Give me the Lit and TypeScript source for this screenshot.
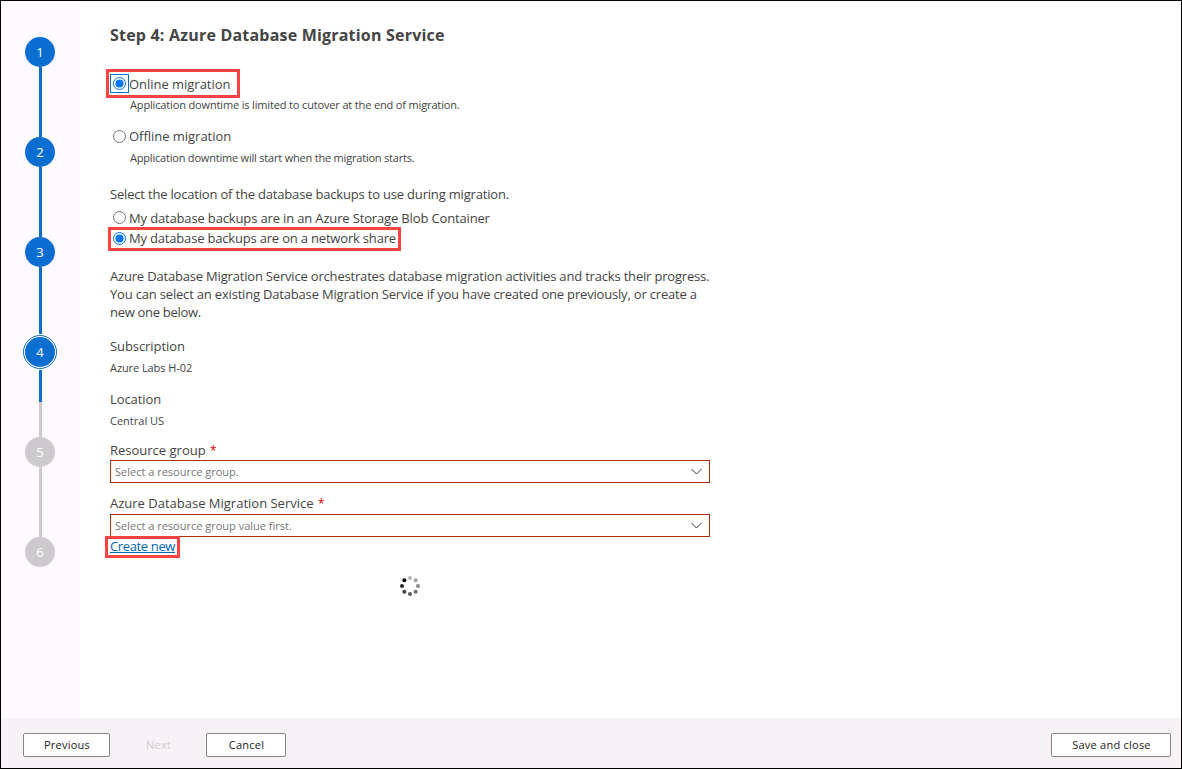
import { LitElement, html, css, svg } from "lit";
import { customElement, property } from "lit/decorators.js";
import { classMap } from "lit/directives/class-map.js";

@customElement("radio-dot")
class RadioDot extends LitElement {
  @property({ type: Boolean }) checked = false;
  static styles = css`
    :host { display: block; width: 13px; height: 13px; }
    svg { display: block; }
  `;
  render() {
    return html`<svg width="13" height="13" viewBox="0 0 13 13">
      <circle cx="6.5" cy="6.5" r="6" fill="#fff" stroke=${this.checked ? "#0075ff" : "#767676"}></circle>
      ${this.checked ? svg`<circle cx="6.5" cy="6.5" r="4" fill="#0075ff"></circle>` : ""}
    </svg>`;
  }
}

@customElement("wizard-steps")
class WizardSteps extends LitElement {
  @property({ type: Number }) current = 4;
  static styles = css`
    :host { display: flex; flex-direction: column; align-items: center; width: 78px; padding-top: 36px; box-sizing: border-box;
      font: 13px/30px "Open Sans", "Noto Sans", sans-serif; color: #fff; }
    .num { width: 30px; height: 30px; border-radius: 50%; background: #0a6ed1; text-align: center; flex: none; }
    .num.todo { background: #cccacd; }
    .num.current { outline: 1px solid #0a6ed1; outline-offset: 1px; }
    .line { width: 3px; height: 70px; margin-left: 1px; background: #0a6ed1; flex: none; }
    .line.before { height: 67px; margin-bottom: 3px; }
    .line.half { height: 67px; margin-top: 3px; background: linear-gradient(#0a6ed1 32px, #cccacd 32px); }
    .line.todo { background: #cccacd; }
  `;
  render() {
    return [1, 2, 3, 4, 5, 6].map(n => html`
      <div class=${classMap({ num: true, current: n === this.current, todo: n > this.current })}>${n}</div>
      ${n < 6 ? html`<div class=${classMap({ line: true, before: n === this.current - 1, half: n === this.current, todo: n > this.current })}></div>` : ""}`);
  }
}

@customElement("drop-down")
class DropDown extends LitElement {
  static styles = css`
    :host { display: flex; align-items: center; justify-content: space-between; box-sizing: border-box; width: 600px; height: 23px;
      border: 1px solid #b22d06; padding: 0 7px 0 4px; background: #fff; color: #767676; font: 11px/16px "Open Sans", "Noto Sans", sans-serif; }
    svg { display: block; }
  `;
  render() {
    return html`<span><slot></slot></span>
      <svg width="11" height="7" viewBox="0 0 11 7"><path d="M.5 1 5.5 6 10.5 1" fill="none" stroke="#333"></path></svg>`;
  }
}

@customElement("app-root")
class AppRoot extends LitElement {
  static styles = css`
    :host { display: block; }
    * { box-sizing: border-box; }
    .frame { width: 1182px; height: 769px; border: 1px solid #000; background: #fff; display: flex; flex-direction: column;
      font: 13px/18px "Open Sans", "Noto Sans", sans-serif; color: #444; overflow: hidden; white-space: nowrap; }
    .main { flex: 1; display: flex; min-height: 0; }
    .rail { width: 79px; background: #fefaff; }
    .content { display: flex; flex-direction: column; align-items: flex-start; padding: 22px 0 0 30px; }
    .title { font-size: 16px; line-height: 24px; font-weight: 700; letter-spacing: 0.2px; }
    .small { font-size: 11px; line-height: 16px; }
    .s1 { letter-spacing: -0.03px; } .s2 { letter-spacing: -0.08px; } .s3 { letter-spacing: -0.15px; }
    .s4 { letter-spacing: -0.185px; } .s5 { letter-spacing: -0.2px; } .s6 { letter-spacing: -0.29px; } .s7 { letter-spacing: -0.36px; }
    .opt { display: flex; align-items: center; height: 18px; padding-left: 3px; gap: 3px; }
    .mark { border: 3px solid #fa4343; }
    .mark.online { height: 29px; width: 134px; margin: 22px 0 0 -4px; padding: 0 0 0 1px; display: flex; align-items: center; }
    .online .focus { border: 1px solid #0078d4; padding: 2px; }
    .mark.share { height: 24px; width: 293px; margin-left: -2px; padding: 0 0 1px 2px; gap: 3px; display: flex; align-items: center; }
    .mark.create { height: 22px; width: 75px; margin: -1px 0 0 -5px; padding-left: 2px; line-height: 14px; position: relative; }
    .link { color: #0065b3; text-decoration: underline; }
    .low { padding-top: 2px; } .high { padding-bottom: 2px; }
    .indent { padding-left: 20px; }
    .req { color: #e00000; margin-left: 1px; font-size: 12px; line-height: 1; }
    .m1 { margin-top: -1px; } .m14 { margin-top: 14px; } .m5 { margin-top: 5px; } .m19 { margin-top: 19px; } .m6 { margin-top: 5px; margin-bottom: 1px; }
    .m16 { margin-top: 16px; } .m11 { margin-top: 11px; } .m12 { margin-top: 12px; } .g1 { margin-top: 1px; } .g2 { margin-top: 2px; }
    .spinner { width: 600px; display: flex; justify-content: center; margin-top: 17px; }
    .footer { height: 50px; background: #f7f2f6; display: flex; align-items: center; padding: 4px 10px 0 22px; font-size: 11px; color: #222; letter-spacing: 0.24px; }
    .btn { height: 24px; line-height: 22px; border: 1px solid #8a8886; border-radius: 2px; background: #fff; text-align: center; padding-left: 1px; }
    .btn.flat { border-color: transparent; background: none; color: #d0cdd0; }
    .w87 { width: 87px; } .w80 { width: 80px; } .w120 { width: 120px; margin-left: auto; } .next { width: 96px; }
  `;
  render() {
    const dots = ["#b5b5b5", "#a0a0a0", "#888", "#6e6e6e", "#585858", "#404040", "#262626", "#000"];
    return html`<div class="frame">
      <div class="main">
        <div class="rail"><wizard-steps></wizard-steps></div>
        <div class="content">
          <div class="title">Step 4: Azure Database Migration Service</div>
          <div class="mark online"><span class="focus"><radio-dot checked></radio-dot></span><span class="s1">Online migration</span></div>
          <div class="small indent m1 s3">Application downtime is limited to cutover at the end of migration.</div>
          <div class="opt m14 s1"><radio-dot></radio-dot><span>Offline migration</span></div>
          <div class="small indent m5 s5">Application downtime will start when the migration starts.</div>
          <div class="m19 s4">Select the location of the database backups to use during migration.</div>
          <div class="opt m6 s3"><radio-dot></radio-dot><span class="low">My database backups are in an Azure Storage Blob Container</span></div>
          <div class="mark share s4"><radio-dot checked></radio-dot><span class="high">My database backups are on a network share</span></div>
          <div class="m16 s4">Azure Database Migration Service orchestrates database migration activities and tracks their progress.<br>You can select an existing Database Migration Service if you have created one previously, or create a<br><span class="s6">new one below.</span></div>
          <div class="m16 s2">Subscription</div>
          <div class="small m5 s2">Azure Labs H-02</div>
          <div class="m14 s2">Location</div>
          <div class="small m5">Central US</div>
          <div class="m12">Resource group <span class="req">*</span></div>
          <drop-down class="g1">Select a resource group.</drop-down>
          <div class="m11">Azure Database Migration Service <span class="req">*</span></div>
          <drop-down class="g2">Select a resource group value first.</drop-down>
          <div class="mark create"><span class="link s7">Create new</span></div>
          <div class="spinner"><svg width="22" height="22" viewBox="-11 -11 22 22">${dots.map((c, i) => svg`<circle cx=${8 * Math.sin(i * Math.PI / 4)} cy=${-8 * Math.cos(i * Math.PI / 4)} r="2" fill=${c}></circle>`)}</svg></div>
        </div>
      </div>
      <div class="footer">
        <div class="btn w87">Previous</div><div class="btn flat next">Next</div><div class="btn w80">Cancel</div><div class="btn w120">Save and close</div>
      </div>
    </div>`;
  }
}
